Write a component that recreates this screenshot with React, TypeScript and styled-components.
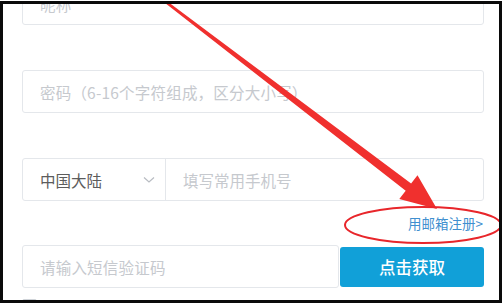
import styled, { createGlobalStyle } from "styled-components";

const GlobalStyle = createGlobalStyle`
  html, body {
    margin: 0;
    padding: 0;
    background: #ffffff;
  }
  body {
    font-family: "Noto Sans CJK SC", "Noto Sans", sans-serif;
  }
`;

const Page = styled.div`
  width: 504px;
  height: 304px;
  padding-top: 1px;
  box-sizing: border-box;
  background: #ffffff;
`;

const Frame = styled.div`
  position: relative;
  width: 502px;
  height: 302px;
  box-sizing: border-box;
  border: 3px solid #0a0a0a;
  overflow: hidden;
  background: #ffffff;
`;

const Form = styled.div`
  display: flex;
  flex-direction: column;
  margin-top: -22px;
  padding-left: 19px;
  width: 462px;
`;

const Field = styled.div<{ gap?: number }>`
  display: flex;
  align-items: center;
  height: 43px;
  box-sizing: border-box;
  border: 1px solid #e4e7eb;
  border-radius: 3px;
  padding: 0 17px;
  margin-bottom: ${({ gap }) => (gap ?? 45)}px;
  font-size: 15.5px;
  color: #c6c9ce;
  letter-spacing: 0.2px;
`;

const PhoneRow = styled.div`
  display: flex;
  height: 43px;
  box-sizing: border-box;
  border: 1px solid #e4e7eb;
  border-radius: 3px;
`;

const Region = styled.div`
  width: 143px;
  flex: none;
  display: flex;
  align-items: center;
  justify-content: space-between;
  padding: 0 10px 0 17px;
  box-sizing: border-box;
  border-right: 1px solid #e4e7eb;
  font-size: 15.5px;
  color: #5c5c5c;
`;

const Phone = styled.div`
  flex: 1;
  display: flex;
  align-items: center;
  padding-left: 17px;
  font-size: 15.5px;
  color: #c6c9ce;
`;

const LinkRow = styled.div`
  display: flex;
  justify-content: flex-end;
  align-items: center;
  height: 44px;
  padding-right: 1px;
`;

const EmailLink = styled.a`
  font-size: 13.5px;
  color: #3f8fcf;
  text-decoration: none;
`;

const CodeRow = styled.div`
  display: flex;
  align-items: center;
  gap: 1px;
`;

const CodeInput = styled(Field)`
  flex: 1;
  margin-bottom: 0;
`;

const SendButton = styled.button`
  width: 144px;
  height: 40px;
  flex: none;
  border: none;
  border-radius: 3px;
  background: #11a0d8;
  color: #ffffff;
  font-family: inherit;
  font-size: 16.5px;
  font-weight: 500;
`;

const Agree = styled.div`
  display: flex;
  align-items: center;
  margin-top: 11px;
`;

const Box = styled.span`
  width: 13px;
  height: 13px;
  border: 1px solid #cfd3d8;
  border-radius: 2px;
`;

const Overlay = styled.svg`
  position: absolute;
  left: -3px;
  top: -4px;
  width: 504px;
  height: 304px;
  pointer-events: none;
`;

const Chevron = () => (
  <svg width="12" height="8" viewBox="0 0 12 8">
    <path d="M1 1.5 L6 6 L11 1.5" fill="none" stroke="#b8bcc2" strokeWidth="1.2" />
  </svg>
);

export default function App() {
  return (
    <Page>
      <GlobalStyle />
      <Frame>
        <Form>
          <Field>昵称</Field>
          <Field>密码（6-16个字符组成，区分大小写）</Field>
          <PhoneRow>
            <Region>
              中国大陆
              <Chevron />
            </Region>
            <Phone>填写常用手机号</Phone>
          </PhoneRow>
          <LinkRow>
            <EmailLink href="#">用邮箱注册&gt;</EmailLink>
          </LinkRow>
          <CodeRow>
            <CodeInput>请输入短信验证码</CodeInput>
            <SendButton>点击获取</SendButton>
          </CodeRow>
          <Agree>
            <Box />
          </Agree>
        </Form>
        <Overlay viewBox="0 0 504 304">
          <polygon
            fill="#f0302e"
            points="161.2,0 162.8,-2 411.1,183.6 417.5,175.3 437,209 399.3,199.1 405.7,190.8"
          />
          <ellipse cx="423" cy="225" rx="78" ry="18" fill="none" stroke="#e8262b" strokeWidth="2" />
        </Overlay>
      </Frame>
    </Page>
  );
}
